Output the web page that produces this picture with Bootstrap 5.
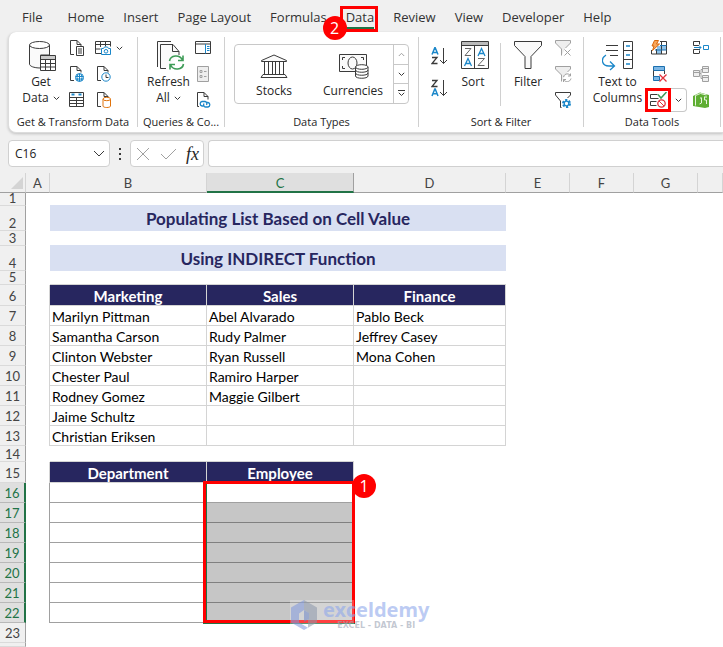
<!DOCTYPE html>
<html lang="en">
<head>
<meta charset="utf-8">
<meta name="viewport" content="width=device-width, initial-scale=1">
<title>Workbook</title>
<link href="https://cdn.jsdelivr.net/npm/bootstrap@5.3.0/dist/css/bootstrap.min.css" rel="stylesheet">
<style>
  :root { --ui: "Open Sans", "Noto Sans", sans-serif; --cell: Lato, "Open Sans", sans-serif; --navy: #27265f; --green: #217346; }
  body { background: #f0f0f0; font-family: var(--ui); font-size: 12px; color: #262626; overflow-x: hidden; }
  button { font: inherit; color: inherit; background: none; border: 0; padding: 0; }
  svg { display: block; flex: none; fill: none; stroke: #3b3b3b; }
  .dim { stroke: #a0a0a0; }
  .tabs { height: 32px; padding-left: 22px; padding-top: 1px; gap: 19px; font-size: 13px; white-space: nowrap; }
  .tabs a { color: #333; text-decoration: none; line-height: 32px; }
  .tab-file { margin-right: 6px; }
  .tab-current { padding-top: 6px; }
  .tabs a.tab-on { line-height: 20px; padding-bottom: 3px; box-shadow: inset 0 -3px var(--green); }
  .mark-red { border: 3px solid #f00; }
  .tab-mark { position: absolute; inset: 5px -4px 0 -6px; pointer-events: none; }
  .step { position: absolute; width: 24px; height: 24px; border-radius: 50%; background: #f00; color: #fff; font: 16px/24px var(--ui); text-align: center; z-index: 3; }
  .step-tab { left: -23px; top: 15px; }
  .ribbon { margin-left: 8px; padding: 5px 0 2px; background: #fff; border: 0 solid #dcdcdc; border-width: 0 0 1px 1px; border-radius: 8px 0 0 8px; box-shadow: 0 1px 3px #0003; overflow: hidden; }
  .rgroup { flex: none; }
  .rbody { height: 77px; padding-top: 3px; }
  .rlabel { line-height: 16px; text-align: center; white-space: nowrap; font-size: 11px; }
  .rule { flex: none; width: 1px; height: 90px; background: #d0d0d0; }
  .rule-in { height: 63px; margin: 3px 0 0 3px; }
  .big { display: flex; flex-direction: column; align-items: center; line-height: 16px; white-space: nowrap; padding-top: 1px; }
  .big svg.pic { height: 30px; margin-bottom: 3px; }
  .big-get { width: 60px; padding-left: 4px; }
  .big-refresh { width: 57px; padding-left: 4px; }
  .big-sort { width: 48px; } .big-filter { width: 54px; } .big-split { width: 67px; }
  .stack { display: flex; flex-direction: column; gap: 10px; flex: none; }
  .stack-next { margin-left: 10px; } .stack-last { margin-left: 6px; }
  .stack-sort { gap: 14px; padding-top: 7px; }
  .g1 { width: 128px; } .g2 { width: 86px; } .g3 { width: 193px; } .g4 { width: 164px; } .g5 { width: 136px; }
  .gallery { border: 1px solid #c8c8c8; border-radius: 4px; margin: 4px 9px 0 9px; height: 60px; }
  .gallery .type { width: 78px; display: flex; flex-direction: column; align-items: center; justify-content: flex-end; line-height: 16px; padding-bottom: 4px; gap: 4px; }
  .scroller { width: 15px; border-left: 1px solid #c8c8c8; }
  .scroller button { flex: 1; display: flex; align-items: center; justify-content: center; }
  .scroller button + button { border-top: 1px solid #c8c8c8; }
  .valid { border: 1px solid #c8c8c8; border-left: 0; border-radius: 0 4px 4px 0; height: 24px; margin: -4px 0 -4px -6px; }
  .valid .mark-red { width: 26px; height: 24px; display: flex; align-items: center; justify-content: center; margin: -1px 4px -1px 0; }
  .fbar { padding: 7px 0 6px 8px; gap: 4px; }
  .boxed { background: #fff; border: 1px solid #d0d0d0; border-radius: 4px; height: 27px; }
  .namebox { width: 102px; }
  .namebox input { width: 74px; border: 0; outline: 0; background: none; padding: 0 0 0 6px; font: 12px var(--ui); color: #222; }
  .fx { width: 74px; }
  .fxsign { font: italic 18px/24px "Liberation Serif", serif; }
  .finput { border-right: 0; border-radius: 4px 0 0 4px; min-width: 0; outline: 0; }
  .sheet { table-layout: fixed; width: 100%; min-width: 723px; border-collapse: separate; border-spacing: 0; background: #fff; font: 14px/16px var(--cell); color: #000; }
  .sheet th, .sheet td { padding: 0; white-space: nowrap; }
  .sheet th { font-size: 13px; line-height: 11px; }
  .sheet thead th { height: 20px; background: #f0f0f0; border-bottom: 1px solid #a0a0a0; border-right: 1px solid #d4d4d4; text-align: center; font-weight: 400; color: #444; padding-top: 2px; }
  .sheet thead th.on { background: #dfdfdf; color: var(--green); border-bottom: 2px solid var(--green); border-right-color: #a0a0a0; }
  .sheet tbody th { background: #f0f0f0; border-right: 1px solid #a0a0a0; border-bottom: 1px solid #dadada; font-weight: 400; color: #444; text-align: center; vertical-align: bottom; padding-bottom: 1px; }
  .sheet tbody th.on { background: #dfdfdf; color: var(--green); border-right: 2px solid var(--green); border-bottom-color: #b8b8b8; }
  .h4 { height: 4px; } .h13 { height: 13px; } .h14 { height: 14px; } .h15 { height: 15px; } .h16 { height: 16px; }
  .h20 { height: 20px; } .h21 { height: 21px; } .h25 { height: 25px; }
  .sheet .h20 th, .sheet .h21 th { padding-bottom: 3px; }
  .sheet td.heading { background: #d9e0f2; color: var(--navy); font-size: 17px; font-weight: 700; text-align: center; line-height: 24px; }
  .sheet td.toned { border-bottom: 1px solid #d9e0f2; }
  .sheet td.lined { border-bottom: 1px solid #d4d4d4; }
  .sheet td.edge { border-right: 1px solid #d4d4d4; }
  .sheet td.name { border-right: 1px solid #d4d4d4; border-bottom: 1px solid #d4d4d4; padding: 2px 0 0 2px; }
  .sheet td.title { background: var(--navy); color: #fff; font-size: 15px; font-weight: 700; text-align: center; border-right: 1px solid #d4d4d4; border-bottom: 1px solid #d4d4d4; padding-top: 2px; }
  .sheet td.slot { border-right: 1px solid #a0a0a0; border-bottom: 1px solid #a0a0a0; }
  .sheet td.picked { background: #c6c6c6; border-bottom-color: #808080; }
  .sheet td.edge2 { border-right: 1px solid #a0a0a0; }
  .range { position: absolute; left: -4px; top: -2px; width: calc(100% + 6px); height: 142px; z-index: 2; box-shadow: inset 1px 0 var(--green), 0 1px var(--green); pointer-events: none; }
  .step-range { right: -23px; top: -9px; }
  .brand { position: absolute; left: 83px; top: 117px; height: 30px; z-index: 3; gap: 5px; pointer-events: none; background: linear-gradient(90deg, #ffffff40 64px, #fff0 64px); }
  .brand b { display: block; font: 700 20px/20px "Noto Sans", sans-serif; color: #8fa8eb99; }
  .brand small { display: block; margin-top: 2px; font: 700 8px/8px "DejaVu Sans", sans-serif; color: #9ba3b399; text-align: center; }
</style>
</head>
<body>
<nav class="tabs d-flex" aria-label="Ribbon tabs">
  <a href="#" class="tab-file">File</a><a href="#">Home</a><a href="#">Insert</a><a href="#">Page Layout</a><a href="#">Formulas</a>
  <div class="tab-current position-relative"><a href="#" class="tab-on d-block">Data</a><span class="tab-mark mark-red"></span><span class="step step-tab">2</span></div>
  <a href="#">Review</a><a href="#">View</a><a href="#">Developer</a><a href="#">Help</a>
</nav>

<section class="ribbon d-flex align-items-start">
  <div class="rgroup g1">
    <div class="rbody d-flex">
      <button class="big big-get">
        <svg class="pic ms-1" width="28" height="30" viewBox="0 0 28 30"><path d="M.5 4v19c0 2 4 4 11 4V14h9V4" fill="#fafafa"/><ellipse cx="10.500" cy="4" rx="10" ry="3.500" fill="#fff"/><path d="M11.500 14.500h15v15h-15z" fill="#fff"/><path d="M12 15h14v3.500H12z" fill="#ccc" stroke="none"/><path d="M11.500 18.500h15M11.500 22.500h15M11.500 26h15M16.500 18v11M21.500 18v11"/></svg>
        <span>Get</span><span class="d-flex align-items-center gap-1">Data <svg width="7" height="5"><path d="M.8 .8l2.700 2.700L6.200 .8"/></svg></span>
      </button>
      <div class="stack">
        <button aria-label="From text"><svg width="16" height="16"><path d="M5 14.500H1.500V.5H8l4 4v2M8 .5v4h4"/><path d="M7.500 6.500h7v9h-7z" fill="#fff"/><path d="M9 9h4M9 11h4M9 13h4"/></svg></button>
        <button aria-label="From web"><svg width="16" height="16"><path d="M5 14.500H1.500V.5H8l4 4v2M8 .5v4h4"/><circle cx="10.500" cy="11.500" r="4" fill="#fff" stroke="#1b87c9"/><path d="M6.500 10.500h8M6.500 13h8M10.500 7.500v8M9 8q-2 3.500 0 7M12 8q2 3.500 0 7" stroke="#1b87c9"/></svg></button>
        <button aria-label="From table"><svg width="16" height="16"><path d="M.5 .5h14v14H.5zM.5 5.500h14M.5 8.500h14M.5 11.500h14M7.500 5v9.500"/><path d="M2.500 2.500h3M9.500 2.500h3" stroke="#1b87c9" stroke-width="2"/></svg></button>
      </div>
      <div class="stack stack-next">
        <button aria-label="From picture" class="d-flex align-items-center gap-1"><svg width="17" height="16"><path d="M6 13.500H.5v-12h15v5M.5 4.500h15M.5 9h5M5.500 1.500V7M10.500 1.500v5"/><path d="M6.500 8.500h2l1-1.500h3l1 1.500h2v6h-9z" fill="#fff" stroke="#1b87c9"/><circle cx="11" cy="11.300" r="1.800" stroke="#1b87c9"/></svg><svg width="7" height="5"><path d="M.8 .8l2.700 2.700L6.200 .8"/></svg></button>
        <button aria-label="Recent sources"><svg width="16" height="16"><path d="M6 14.500H2.500V.5H9l4 4v2M9 .5v4h4"/><circle cx="11" cy="11" r="4.200" fill="#fff" stroke="#1b87c9"/><path d="M11 8.500v3h2.500"/></svg></button>
        <button aria-label="Existing connections"><svg width="16" height="16"><path d="M6 14.500H2.500V.5H9l4 4v1M9 .5v4h4"/><path d="M8 7v7c0 2 7.500 2 7.500 0V7" fill="#fff" stroke="#e0730c"/><ellipse cx="11.750" cy="7" rx="3.750" ry="1.700" fill="#fff" stroke="#e0730c"/></svg></button>
      </div>
    </div>
    <div class="rlabel">Get &amp; Transform Data</div>
  </div>
  <div class="rule"></div>
  <div class="rgroup g2">
    <div class="rbody d-flex">
      <button class="big big-refresh">
        <svg class="pic ms-1" width="28" height="30" viewBox="0 0 28 30"><path d="M.5 26V.5H14M9 27.500H3.500V3.500H16l6 7V14" fill="#fafafa"/><path d="M15.500 3.500v7H22"/><path d="M12.500 20c1-6 10-7 13-1M26 14.500v5h-5M26.500 23c-1 6-10 7-13 1M13 28.500v-5h5" stroke="#3d9b56" stroke-width="1.600"/></svg>
        <span>Refresh</span><span class="d-flex align-items-center gap-1">All <svg width="7" height="5"><path d="M.8 .8l2.700 2.700L6.200 .8"/></svg></span>
      </button>
      <div class="stack">
        <button aria-label="Queries and connections"><svg width="17" height="16"><path d="M.5 1.500h15v12H.5zM.5 4h15"/><path d="M10.500 4v9.500M12 6.500h2.500M12 8.500h2.500M12 10.500h2.500" stroke="#1b87c9"/></svg></button>
        <button aria-label="Properties" disabled><svg class="dim" width="17" height="16"><path d="M2.500 .5h11v15h-11z" fill="#eee"/><path d="M5 4.500h2v2H5zM5 9.500h2v2H5zM9 5.500h2.500M9 10.500h2.500"/></svg></button>
        <button aria-label="Edit links"><svg width="17" height="16"><path d="M4 14.500H2.500V.5H9l4 4v3M9 .5v4h4"/><path d="M8.500 14H7a2.300 2.300 0 010-4.500h3a2.300 2.300 0 011.500 3.500M11 10.500h2a2.300 2.300 0 010 4.500h-2.500a2.300 2.300 0 01-1.500-3.500" stroke="#1b87c9" stroke-width="1.300"/></svg></button>
      </div>
    </div>
    <div class="rlabel">Queries &amp; Co...</div>
  </div>
  <div class="rule"></div>
  <div class="rgroup g3">
    <div class="rbody">
      <div class="gallery d-flex justify-content-between">
        <button class="type"><svg width="28" height="25" viewBox="0 0 28 25"><path d="M1.500 7.500v-1L14 1l12.500 5.500v1zM3 20.500h22M1 23.500h26M1 23.500l2-3M27 23.500l-2-3M4.500 8v12M8.500 8v12M12.500 8v12M15.500 8v12M19.500 8v12M23.500 8v12" fill="#fafafa"/></svg><span>Stocks</span></button>
        <button class="type"><svg width="31" height="25" viewBox="0 0 31 25"><path d="M1.500 .5h27v17h-27z" fill="#fafafa"/><path d="M7 3.500H4.500V6M4.500 12v2.500H7M23 3.500h2.500V6"/><ellipse cx="14.500" cy="9" rx="4.500" ry="6"/><path d="M17.500 13v9c0 3 12.500 3 12.500 0v-9" fill="#fff"/><ellipse cx="23.750" cy="13" rx="6.250" ry="2.300" fill="#fff"/><path d="M17.500 16c0 3 12.500 3 12.500 0M17.500 19c0 3 12.500 3 12.500 0"/></svg><span>Currencies</span></button>
        <div class="scroller d-flex flex-column">
          <button aria-label="Up"><svg class="dim" width="7" height="5"><path d="M.8 4l2.700-2.700L6.200 4"/></svg></button>
          <button aria-label="Down"><svg width="7" height="5"><path d="M.8 .8l2.700 2.700L6.200 .8"/></svg></button>
          <button aria-label="More"><svg width="9" height="7"><path d="M1 .5h7M1.800 2.800l2.700 2.700L7.200 2.800"/></svg></button>
        </div>
      </div>
    </div>
    <div class="rlabel">Data Types</div>
  </div>
  <div class="rule"></div>
  <div class="rgroup g4">
    <div class="rbody d-flex ps-2">
      <div class="stack stack-sort ps-1">
        <button aria-label="Sort A to Z"><svg width="18" height="18"><path d="M1 7.500L3.800 .8h.4L7 7.500M2 5.500h4" stroke="#1b87c9" stroke-width="1.500"/><path d="M1 10.500h5L1 16.500h5.500" stroke-width="1.300"/><path d="M12.500 1v15.500M9 13l3.500 3.500L16 13"/></svg></button>
        <button aria-label="Sort Z to A"><svg width="18" height="18"><path d="M1 17L3.800 10h.4L7 17M2 14.800h4" stroke="#1b87c9" stroke-width="1.500"/><path d="M1 1.500h5L1 7.500h5.500" stroke-width="1.300"/><path d="M12.500 1v15.500M9 13l3.500 3.500L16 13"/></svg></button>
      </div>
      <button class="big big-sort">
        <svg class="pic ms-1" width="28" height="30" viewBox="0 0 28 30"><path d="M.5 .5h27v27H.5z"/><path d="M1 1h26v3H1z" fill="#bbb" stroke="none"/><path d="M.5 4.500h27M13.500 4.500v23"/><path d="M4 7.500h6L4 14.500h6M17 17.500h6.500l-6.500 7h6.500" stroke="#666"/><path d="M3.500 25L7 17.500l3.500 7.500M4.500 22.500h5M17 15l3.500-7.500L24 15M18 12.500h5" stroke="#1b87c9" stroke-width="1.300"/></svg>
        <span>Sort</span>
      </button>
      <div class="rule rule-in"></div>
      <button class="big big-filter">
        <svg class="pic" width="28" height="30" viewBox="0 0 28 30"><path d="M.5 .5h27v4L17 15.500v12h-6v-12L.5 4.500z" fill="#fafafa"/></svg>
        <span>Filter</span>
      </button>
      <div class="stack">
        <button aria-label="Clear" disabled><svg class="dim" width="17" height="16"><path d="M6.500 15.500V9L.5 3V.5h15V3l-5 5" fill="#eee"/><path d="M9.500 9.500l6 6M15.500 9.500l-6 6"/></svg></button>
        <button aria-label="Reapply" disabled><svg class="dim" width="17" height="16"><path d="M6.500 15.500V9L.5 3V.5h15V3l-3 3" fill="#eee"/><path d="M8.500 11c1-4 6-4 7-1M15.500 7.500V10h-2.500M16 12.500c-1 4-6 4-7.500 1M8.500 16v-2.500h2.500"/></svg></button>
        <button aria-label="Advanced"><svg width="17" height="16"><path d="M6.500 15.500h-1V9L.5 3V.5h15V3l-3 3"/><circle cx="11.500" cy="11.500" r="3.500" fill="#fff" stroke="#1b87c9" stroke-width="2" stroke-dasharray="2.200 1.465"/><circle cx="11.500" cy="11.500" r="2.300" stroke="#1b87c9" fill="#fff" stroke-width="1.300"/></svg></button>
      </div>
    </div>
    <div class="rlabel">Sort &amp; Filter</div>
  </div>
  <div class="rule"></div>
  <div class="rgroup g5">
    <div class="rbody d-flex">
      <button class="big big-split">
        <svg class="pic" width="31" height="30" viewBox="0 0 31 30"><path d="M4 4.500h12M4 9.500h12M8 14.500h8M21.500 .5h9v27h-9zM21.500 9.500h9M21.500 18.500h9"/><path d="M24 5h4M24 14h4M24 23h4M4 14c-6 4-4 11 3 11h5M8 20.500l4.500 4.500L8 29" stroke="#1b87c9" stroke-width="1.300"/></svg>
        <span>Text to</span><span>Columns</span>
      </button>
      <div class="stack">
        <button aria-label="Flash fill"><svg width="17" height="16"><path d="M6 6h4.500v8H6zM10.500 6h4.500v4h-4.500z" fill="#8fc3ea" stroke="none"/><path d="M9 1.500h6.500v12.500H.5V10M10.500 1.500V14M5.500 9v5"/><path d="M9 5.500h6.500M4 10h11.500" stroke="#1b6fae"/><path d="M3.500 .5h4L5.500 4h3L1.500 10.500l1.500-4.500H1z" fill="#f9a65a" stroke="#d8660b"/></svg></button>
        <button aria-label="Remove duplicates"><svg width="17" height="16"><path d="M2.500 .5h11v4h-11zM2.500 10.500h6v4h-6z" fill="#7db7e5" stroke="#1b6fae"/><path d="M2.500 4.500v6M13.500 4.500V8"/><path d="M8.500 8.500l7 7M15.500 8.500l-7 7" stroke="#e2333d" stroke-width="1.300"/></svg></button>
        <div class="valid d-flex">
          <button class="mark-red" aria-label="Data validation"><svg width="17" height="16"><path d="M7.500 2.500h-7v4h8M6.500 9.500h-6v4h6"/><path d="M8 2.500l3 3.500 5.500-6" stroke="#3d9b56" stroke-width="1.500"/><circle cx="11.500" cy="11.500" r="3.700" fill="#fff" stroke="#e2333d" stroke-width="1.300"/><path d="M9 9l5 5" stroke="#e2333d"/></svg></button>
          <button aria-label="Data validation menu" class="pe-1"><svg width="7" height="5"><path d="M.8 .8l2.700 2.700L6.200 .8"/></svg></button>
        </div>
      </div>
      <div class="stack stack-last">
        <button aria-label="Consolidate"><svg width="17" height="16"><path d="M7 1.500H.5v4H6M7 9.500H.5v4H6M6.500 1.500v3M6.500 10.500v3"/><path d="M1 7.500h7M6 5.500l2 2-2 2M10.500 5.500h5v4h-5z" stroke="#1b87c9"/></svg></button>
        <button aria-label="Relationships" disabled><svg class="dim" width="17" height="16"><path d="M.5 4.500h6v6h-6zM9.500 .5h6v6h-6zM9.500 9.500h6v6h-6z" fill="#eee"/><path d="M.5 6.500h6M9.500 2.500h6M9.500 11.500h6M6.500 7.500H8v-4h1.500M8 7.500v5h1.500"/></svg></button>
        <button aria-label="Data model"><svg width="17" height="16"><path d="M0 4l7-3.500L16 3v12l-4 1L0 14z" fill="#5fae33" stroke="none"/><path d="M2.500 3.500v10M2.500 3.500l5-2 6 1.500M8.500 6v5l-2 1M7 6h2M11 5h3M11.500 5v3h2v4" stroke="#e8f5df"/></svg></button>
      </div>
    </div>
    <div class="rlabel">Data Tools</div>
  </div>
  <div class="rule"></div>
</section>

<div class="fbar d-flex align-items-center">
  <div class="boxed namebox d-flex align-items-center justify-content-between pe-1">
    <input type="text" value="C16" aria-label="Name box">
    <button aria-label="Name list"><svg width="12" height="7"><path d="M1 1l5 5 5-5"/></svg></button>
  </div>
  <svg width="12" height="14"><path d="M6 1v2M6 6v2M6 11v2" stroke-width="2"/></svg>
  <div class="boxed fx d-flex align-items-center justify-content-between px-1">
    <button aria-label="Cancel"><svg class="dim" width="15" height="14"><path d="M2 1l12 12M14 1L2 13"/></svg></button>
    <button aria-label="Enter"><svg class="dim" width="17" height="14"><path d="M1 7l5 5L16 2"/></svg></button>
    <button class="fxsign" aria-label="Insert function">fx</button>
  </div>
  <input type="text" class="boxed finput flex-grow-1" aria-label="Formula bar">
</div>

<table class="sheet">
  <colgroup><col style="width:26px"><col style="width:24px"><col style="width:157px"><col style="width:147px"><col style="width:152px"><col style="width:64px"><col style="width:64px"><col style="width:64px"><col></colgroup>
  <thead>
    <tr><th><svg width="22" height="14" class="ms-auto"><path d="M20 0v12H8z" fill="#d4d4d4" stroke="none"/></svg></th><th>A</th><th>B</th><th class="on">C</th><th>D</th><th>E</th><th>F</th><th>G</th><th></th></tr>
  </thead>
  <tbody>
    <tr class="h13"><th>1</th><td></td><td class="toned" colspan="3"></td><td colspan="4"></td></tr>
    <tr class="h25"><th>2</th><td></td><td class="heading" colspan="3">Populating List Based on Cell Value</td><td colspan="4"></td></tr>
    <tr class="h15"><th>3</th><td></td><td class="toned" colspan="3"></td><td colspan="4"></td></tr>
    <tr class="h25"><th>4</th><td></td><td class="heading" colspan="3">Using INDIRECT Function</td><td colspan="4"></td></tr>
    <tr class="h14"><th>5</th><td></td><td class="lined" colspan="3"></td><td colspan="4"></td></tr>
    <tr class="h21"><th>6</th><td class="edge"></td><td class="title">Marketing</td><td class="title">Sales</td><td class="title">Finance</td><td colspan="4"></td></tr>
    <tr class="h20"><th>7</th><td class="edge"></td><td class="name">Marilyn Pittman</td><td class="name">Abel Alvarado</td><td class="name">Pablo Beck</td><td colspan="4"></td></tr>
    <tr class="h20"><th>8</th><td class="edge"></td><td class="name">Samantha Carson</td><td class="name">Rudy Palmer</td><td class="name">Jeffrey Casey</td><td colspan="4"></td></tr>
    <tr class="h20"><th>9</th><td class="edge"></td><td class="name">Clinton Webster</td><td class="name">Ryan Russell</td><td class="name">Mona Cohen</td><td colspan="4"></td></tr>
    <tr class="h20"><th>10</th><td class="edge"></td><td class="name">Chester Paul</td><td class="name">Ramiro Harper</td><td class="name"></td><td colspan="4"></td></tr>
    <tr class="h20"><th>11</th><td class="edge"></td><td class="name">Rodney Gomez</td><td class="name">Maggie Gilbert</td><td class="name"></td><td colspan="4"></td></tr>
    <tr class="h20"><th>12</th><td class="edge"></td><td class="name">Jaime Schultz</td><td class="name"></td><td class="name"></td><td colspan="4"></td></tr>
    <tr class="h20"><th>13</th><td class="edge"></td><td class="name">Christian Eriksen</td><td class="name"></td><td class="name"></td><td colspan="4"></td></tr>
    <tr class="h16"><th>14</th><td></td><td class="lined" colspan="2"></td><td colspan="5"></td></tr>
    <tr class="h21"><th>15</th><td class="edge"></td><td class="title">Department</td><td class="title">Employee</td><td colspan="5"></td></tr>
    <tr class="h20"><th class="on">16</th><td class="edge2"></td><td class="slot"></td>
      <td class="slot position-relative"><div class="range mark-red"></div><span class="step step-range">1</span>
        <div class="brand d-flex"><svg width="28" height="30" viewBox="0 0 28 30" opacity=".55"><path d="M14 0L1 7.500v15L14 30l4-2.300-9-5.200v-9l5-3.500z" fill="#7f97dd" stroke="none"/><path d="M14 0l13 7.500v15L18 27.700V18.700l1-5.200-5-3.500z" fill="#8d98ab" stroke="none"/><path d="M14 10l5 3v6l-5 3z" fill="#6d86c8" stroke="none"/></svg><span><b>exceldemy</b><small>EXCEL - DATA - BI</small></span></div></td><td colspan="5"></td></tr>
    <tr class="h20"><th class="on">17</th><td class="edge2"></td><td class="slot"></td><td class="slot picked"></td><td colspan="5"></td></tr>
    <tr class="h20"><th class="on">18</th><td class="edge2"></td><td class="slot"></td><td class="slot picked"></td><td colspan="5"></td></tr>
    <tr class="h20"><th class="on">19</th><td class="edge2"></td><td class="slot"></td><td class="slot picked"></td><td colspan="5"></td></tr>
    <tr class="h20"><th class="on">20</th><td class="edge2"></td><td class="slot"></td><td class="slot picked"></td><td colspan="5"></td></tr>
    <tr class="h20"><th class="on">21</th><td class="edge2"></td><td class="slot"></td><td class="slot picked"></td><td colspan="5"></td></tr>
    <tr class="h20"><th class="on">22</th><td class="edge2"></td><td class="slot"></td><td class="slot picked"></td><td colspan="5"></td></tr>
    <tr class="h20"><th>23</th><td></td><td colspan="7"></td></tr>
    <tr class="h4"><th></th><td colspan="8"></td></tr>
  </tbody>
</table>
<script src="https://cdn.jsdelivr.net/npm/bootstrap@5.3.0/dist/js/bootstrap.bundle.min.js"></script>
</body>
</html>
